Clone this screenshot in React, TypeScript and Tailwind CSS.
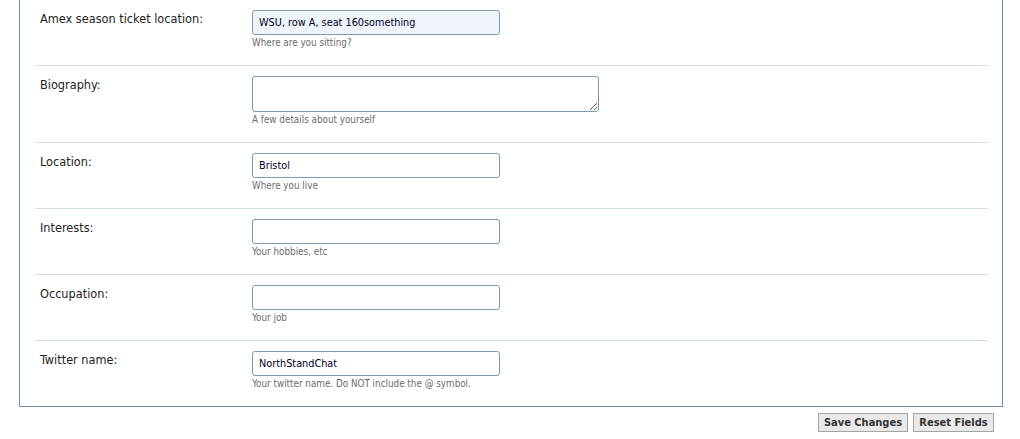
import React from "react";

interface Field {
  label: string;
  value: string;
  hint: string;
  multiline?: boolean;
  filled?: boolean;
}

const fields: Field[] = [
  { label: "Amex season ticket location:", value: "WSU, row A, seat 160something", hint: "Where are you sitting?", filled: true },
  { label: "Biography:", value: "", hint: "A few details about yourself", multiline: true },
  { label: "Location:", value: "Bristol", hint: "Where you live" },
  { label: "Interests:", value: "", hint: "Your hobbies, etc" },
  { label: "Occupation:", value: "", hint: "Your job" },
  { label: "Twitter name:", value: "NorthStandChat", hint: "Your twitter name. Do NOT include the @ symbol." },
];

const font = "font-['DejaVu_Sans_Condensed','DejaVu_Sans',sans-serif]";

function FieldRow({ field, first }: { field: Field; first: boolean }) {
  return (
    <div className={`flex pt-[10px] pb-[15px] ${first ? "" : "border-t border-[#d3dfe9]"}`}>
      <label className="w-[217px] shrink-0 pl-[5px] pt-[1px] text-[12.6px] leading-[16px] text-[#222]">{field.label}</label>
      <div className="flex flex-col">
        {field.multiline ? (
          <textarea
            defaultValue={field.value}
            className={`${font} block h-[36px] w-[347px] rounded-[3px] border border-[#7d9bb3] bg-white px-[6px] py-[4px] text-[11px] text-[#000] outline-none`}
          />
        ) : (
          <input
            defaultValue={field.value}
            className={`${font} block h-[25px] w-[248px] rounded-[3px] border border-[#7d9bb3] px-[6px] text-[10.8px] text-[#000022] outline-none ${
              field.filled ? "bg-[#eef4fa]" : "bg-white"
            }`}
          />
        )}
        <span className="mt-[1px] text-[9.8px] leading-[14px] text-[#6b6b6b]">{field.hint}</span>
      </div>
    </div>
  );
}

export default function App() {
  return (
    <div className={`${font} h-[439px] w-[1020px] overflow-hidden bg-white`}>
      <div className="ml-[19px] w-[984px] border-x border-b border-[#6f93ad] pl-[15px] pr-[14px]">
        {fields.map((f, i) => (
          <FieldRow key={f.label} field={f} first={i === 0} />
        ))}
      </div>
      <div className="mt-[6px] flex w-[994px] justify-end gap-[5px]">
        <button className="h-[19px] w-[90px] border border-[#a4a4a4] bg-[#e9e9e9] text-[11px] font-bold leading-[17px] text-[#333]">
          Save Changes
        </button>
        <button className="h-[19px] w-[81px] border border-[#a4a4a4] bg-[#e9e9e9] text-[11px] font-bold leading-[17px] text-[#333]">
          Reset Fields
        </button>
      </div>
    </div>
  );
}
